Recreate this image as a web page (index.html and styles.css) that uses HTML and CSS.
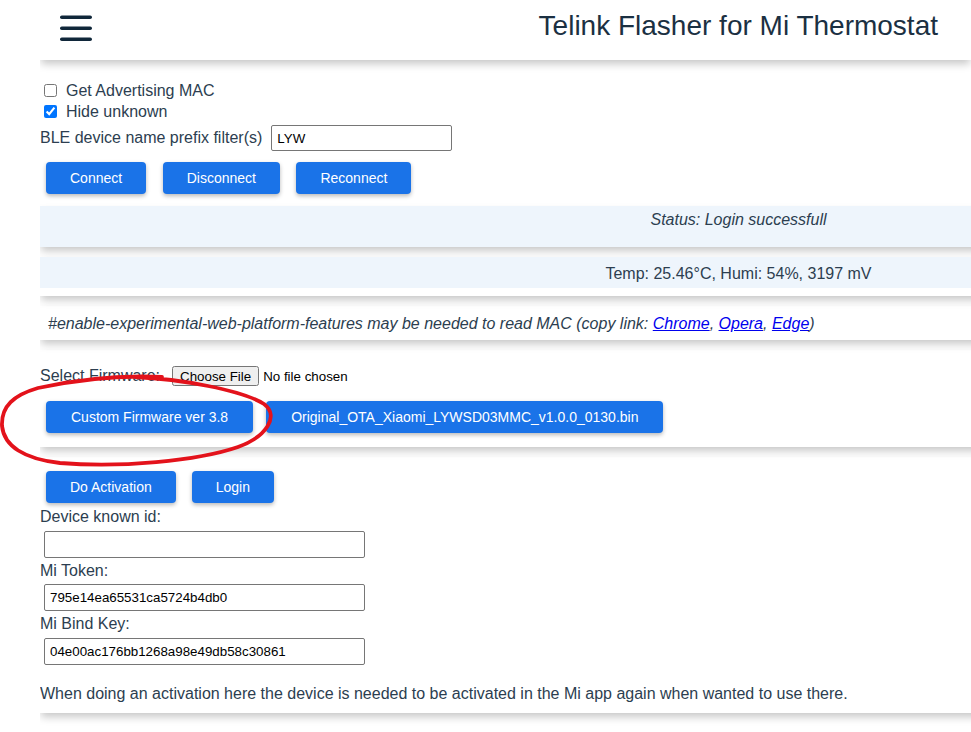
FILE: index.html
```html
<!DOCTYPE html>
<html lang="en">
<head>
<meta charset="utf-8">
<title>Telink Flasher for Mi Thermostat</title>
<link rel="stylesheet" href="styles.css">
</head>
<body>
<div class="page">
  <header class="topbar">
    <svg class="menu" width="32" height="27" viewBox="0 0 32 27" aria-hidden="true">
      <rect x="0" y="0.5" width="32" height="3.6" rx="1.8" fill="#10273a"/>
      <rect x="0" y="11.5" width="32" height="3.6" rx="1.8" fill="#10273a"/>
      <rect x="0" y="22.5" width="32" height="3.6" rx="1.8" fill="#10273a"/>
    </svg>
    <h1 class="title">Telink Flasher for Mi Thermostat</h1>
  </header>

  <section class="controls">
    <label class="check-row"><input class="check" type="checkbox">Get Advertising MAC</label>
    <label class="check-row"><input class="check" type="checkbox" checked>Hide unknown</label>
    <div class="filter-row">
      <span>BLE device name prefix filter(s)</span>
      <input class="text-input prefix" type="text" value="LYW">
    </div>
    <div class="btn-row main-row">
      <button class="btn">Connect</button>
      <button class="btn">Disconnect</button>
      <button class="btn">Reconnect</button>
    </div>
  </section>

  <div class="card status">Status: Login successfull</div>

  <div class="card temp-card">
    <div class="temp">Temp: 25.46°C, Humi: 54%, 3197 mV</div>
  </div>

  <div class="card note">#enable-experimental-web-platform-features may be needed to read MAC (copy link: <a href="#">Chrome</a>, <a href="#">Opera</a>, <a href="#">Edge</a>)</div>

  <div class="card firmware">
    <div class="file-row">
      <span>Select Firmware:</span>
      <input class="file" type="file">
    </div>
    <div class="btn-row fw-row">
      <button class="btn">Custom Firmware ver 3.8</button>
      <button class="btn">Original_OTA_Xiaomi_LYWSD03MMC_v1.0.0_0130.bin</button>
    </div>
  </div>

  <div class="card activation">
    <div class="btn-row">
      <button class="btn">Do Activation</button>
      <button class="btn">Login</button>
    </div>
    <div class="field-label first">Device known id:</div>
    <input class="text-input key" type="text" value="">
    <div class="field-label">Mi Token:</div>
    <input class="text-input key" type="text" value="795e14ea65531ca5724b4db0">
    <div class="field-label">Mi Bind Key:</div>
    <input class="text-input key" type="text" value="04e00ac176bb1268a98e49db58c30861">
    <p class="footnote">When doing an activation here the device is needed to be activated in the Mi app again when wanted to use there.</p>
  </div>
</div>

<svg class="annotation" width="971" height="732" viewBox="0 0 971 732" aria-hidden="true">
  <path d="M 135 377 C 180 379, 242 390, 264 404 C 280 416, 266 437, 238 447 C 197 461, 120 468, 60 463 C 24 459, 4 446, 2 426 C 1 406, 14 395, 38 388 C 75 380, 120 375, 162 377" fill="none" stroke="#e3121b" stroke-width="3.8" stroke-linecap="round" stroke-linejoin="round"/>
</svg>
</body>
</html>
```

FILE: styles.css
```css
html {
  overflow: hidden;
}

body {
  margin: 0;
  background: #ffffff;
  color: #2c3e50;
  font-family: "Liberation Sans", Arial, sans-serif;
  font-size: 16px;
  line-height: 18px;
}

.page {
  margin-left: 40px;
  overflow: hidden;
  padding-bottom: 20px;
}

/* header */
.topbar {
  height: 60px;
  display: flex;
  align-items: flex-start;
  padding: 0 33px 0 20px;
  background: #ffffff;
  box-shadow: 0 5px 8px -1px rgba(0, 0, 0, 0.22);
  position: relative;
  z-index: 1;
}

.menu {
  margin-top: 15px;
  display: block;
}

.title {
  margin: 10px 0 0 auto;
  font-size: 28px;
  line-height: 32px;
  font-weight: normal;
  color: #1b3042;
}

/* controls */
.controls {
  padding-top: 20px;
  display: flex;
  flex-direction: column;
  align-items: flex-start;
}

.check-row {
  height: 21px;
  display: flex;
  align-items: center;
}

.check {
  width: 13px;
  height: 13px;
  margin: 0 9px 0 4px;
}

.filter-row {
  margin-top: 3px;
  display: flex;
  align-items: center;
  gap: 9px;
}

.text-input {
  box-sizing: border-box;
  border: 1px solid #767676;
  border-radius: 2px;
  padding: 0 5px;
  font-family: "Liberation Sans", Arial, sans-serif;
  font-size: 13.33px;
  color: #000000;
  background: #ffffff;
}

.prefix {
  width: 181px;
  height: 26px;
}

.btn-row {
  display: flex;
  gap: 16px;
  margin-left: 6px;
  margin-top: 11px;
}

.main-row {
  gap: 16.5px;
}

.btn {
  height: 32px;
  padding: 0 24px;
  border: none;
  border-radius: 4px;
  background: #1a73e8;
  color: #ffffff;
  font-family: "Liberation Sans", Arial, sans-serif;
  font-size: 14px;
  box-shadow: 0 2px 4px rgba(0, 0, 0, 0.28);
}

/* cards */
.card {
  width: 1397px;
  box-sizing: border-box;
  margin-top: 10px;
  box-shadow: 0 5px 8px -1px rgba(0, 0, 0, 0.22);
}

.status {
  margin-top: 12px;
  background: #eef5fc;
  padding: 5px 0 18px;
  text-align: center;
  font-style: italic;
}

.temp-card {
  padding-bottom: 8px;
}

.temp {
  background: #eef5fc;
  padding: 8px 0 5px;
  text-align: center;
}

.note {
  padding: 8.5px 8px 7.5px;
  font-style: italic;
}

.note a {
  color: #0000ee;
}

.firmware {
  padding: 16px 0 14px;
}

.file-row {
  height: 20px;
  display: flex;
  align-items: center;
  gap: 12px;
}

.file {
  font-family: "Liberation Sans", Arial, sans-serif;
  font-size: 13.33px;
  color: #000000;
}

.file::file-selector-button {
  font-family: "Liberation Sans", Arial, sans-serif;
  font-size: 13.33px;
  height: 20px;
}

.fw-row {
  margin-top: 15px;
  gap: 13px;
}

.fw-row .btn {
  padding: 0 25px;
}

.activation {
  padding: 14px 0 9.5px;
}

.activation .btn-row {
  margin-top: 0;
}

.field-label {
  margin-top: 4px;
}

.field-label.first {
  margin-top: 5px;
}

.key {
  display: block;
  width: 321px;
  height: 27px;
  margin: 4.5px 0 0 4px;
}

.footnote {
  margin: 20.5px 0 0;
}

/* hand-drawn annotation overlay */
.annotation {
  position: absolute;
  top: 0;
  left: 0;
  pointer-events: none;
}
```
